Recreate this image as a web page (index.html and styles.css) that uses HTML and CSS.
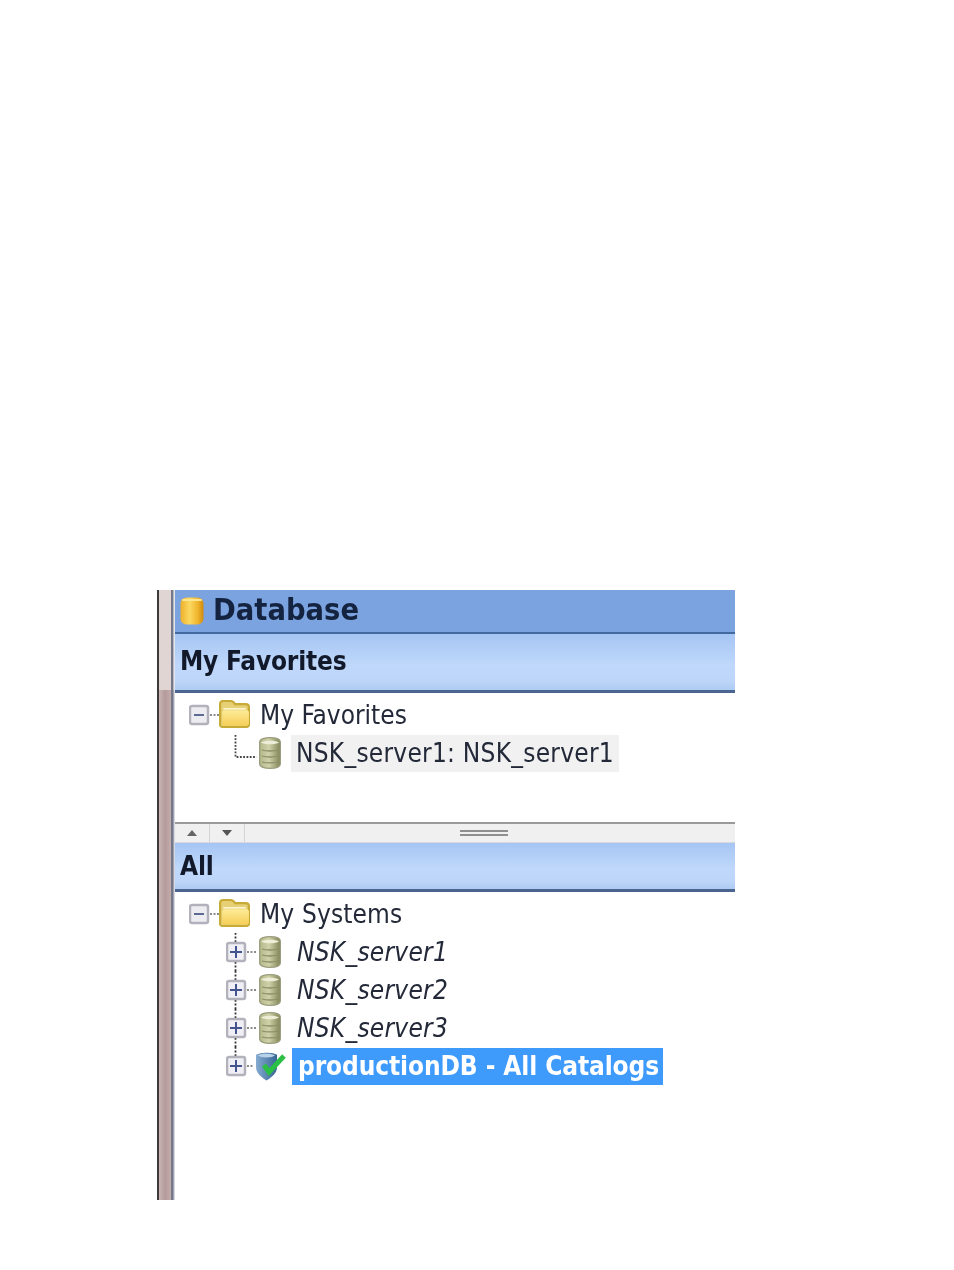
FILE: index.html
```html
<!DOCTYPE html>
<html lang="en">
<head>
<meta charset="utf-8">
<title>Database</title>
<link rel="stylesheet" href="styles.css">
</head>
<body>
<svg class="defs" width="0" height="0" aria-hidden="true">
  <defs>
    <linearGradient id="cyl" x1="0" x2="1" y1="0" y2="0">
      <stop offset="0" stop-color="#eeb02a"/><stop offset=".4" stop-color="#fbd860"/><stop offset=".75" stop-color="#f0b52c"/><stop offset="1" stop-color="#cf8a10"/>
    </linearGradient>
    <linearGradient id="srv" x1="0" x2="1" y1="0" y2="0">
      <stop offset="0" stop-color="#b4b88a"/><stop offset=".45" stop-color="#cfd2a8"/><stop offset="1" stop-color="#7f8456"/>
    </linearGradient>
    <linearGradient id="fold" x1="0" x2="0" y1="0" y2="1">
      <stop offset="0" stop-color="#fdeb98"/><stop offset="1" stop-color="#f6cf58"/>
    </linearGradient>
    <linearGradient id="shield" x1="0" x2="1" y1="0" y2="0">
      <stop offset="0" stop-color="#86acd2"/><stop offset="1" stop-color="#366493"/>
    </linearGradient>
    <symbol id="server" viewBox="0 0 22 32">
      <path d="M.7 5C.7 2 6 .7 11 .7s10.300 1.300 10.300 4.300v22c0 3-5.300 4.300-10.300 4.300S.7 30 .7 27z" fill="url(#srv)" stroke="#9a9d7c" stroke-width="1.300"/>
      <path d="M2 5.500c3 2.400 15 2.400 18 0-3-2.400-15-2.400-18 0z" fill="#eceed8"/>
      <path d="M3 13c4 1.300 12 1.300 16 0M3 19c4 1.300 12 1.300 16 0M3 25c4 1.300 12 1.300 16 0" fill="none" stroke="#8a8e66" stroke-width="1.300"/>
    </symbol>
    <symbol id="folder" viewBox="1 0 29 27" preserveAspectRatio="none">
      <path d="M2 24V4c0-2 1-3 3-3h7c2 0 3 1 4 3h10c2 0 3 1 3 3v17c0 1-1 2-2 2H4c-1 0-2-1-2-2z" fill="#e6cf74" stroke="#c8aa36" stroke-width="2"/>
      <path d="M4 12c0-1 1-2 2-2h21c1 0 2 1 2 2v11c0 1-1 1.500-2 1.500H6c-1 0-2-.5-2-1.500z" fill="url(#fold)"/>
      <path d="M5 8.500h21" stroke="#fff8d6" stroke-width="1.500"/>
    </symbol>
  </defs>
</svg>
<main class="window">
  <div class="rail"></div>
  <div class="panel">
    <header class="title-bar">
      <svg class="db-icon" viewBox="0 0 24 28" width="24" height="28" aria-hidden="true">
        <rect x=".5" y=".5" width="23" height="27" rx="6" fill="url(#cyl)"/>
        <path d="M3 3h18" stroke="#fde68e" stroke-width="2" stroke-linecap="round"/>
      </svg>
      <h1 class="title">Database</h1>
    </header>
    <h2 class="section section-fav">My Favorites</h2>
    <section class="tree tree-fav">
      <div class="row row-root">
        <svg class="toggle" viewBox="0 0 31 38" width="31" height="38" aria-hidden="true">
          <rect x="1" y="10" width="18" height="18" rx="2" fill="#ececf1" stroke="#b2b2bc" stroke-width="2.500"/>
          <path d="M5 19h10" stroke="#5c6a94" stroke-width="2"/>
          <path d="M21 19h9" stroke="#666" stroke-width="1.500" stroke-dasharray="2 1.500"/>
        </svg>
        <svg class="icon-folder"><use href="#folder"/></svg>
        <span class="label">My Favorites</span>
      </div>
      <div class="row row-child">
        <svg class="toggle" viewBox="0 0 31 38" width="31" height="38" aria-hidden="true">
          <path d="M9.500 1v22h21" fill="none" stroke="#444" stroke-width="1.800" stroke-dasharray="1.800 1.500"/>
        </svg>
        <svg class="icon-server"><use href="#server"/></svg>
        <span class="label label-fav">NSK_server1: NSK_server1</span>
      </div>
    </section>
    <div class="splitter">
      <span class="arrow-cell"><span class="arrow arrow-up"></span></span>
      <span class="arrow-cell"><span class="arrow arrow-down"></span></span>
      <span class="grip"></span>
    </div>
    <h2 class="section section-all">All</h2>
    <section class="tree tree-all">
      <div class="row row-root">
        <svg class="toggle" viewBox="0 0 31 38" width="31" height="38" aria-hidden="true">
          <rect x="1" y="10" width="18" height="18" rx="2" fill="#ececf1" stroke="#b2b2bc" stroke-width="2.500"/>
          <path d="M5 19h10" stroke="#5c6a94" stroke-width="2"/>
          <path d="M21 19h9" stroke="#666" stroke-width="1.500" stroke-dasharray="2 1.500"/>
        </svg>
        <svg class="icon-folder"><use href="#folder"/></svg>
        <span class="label label-sys">My Systems</span>
      </div>
      <div class="row row-child">
        <svg class="toggle" viewBox="0 0 31 38" width="31" height="38" aria-hidden="true">
          <path d="M9.500 0v9M9.500 29v9" stroke="#333" stroke-width="1.800" stroke-dasharray="1.800 1.800"/>
          <rect x="1" y="10" width="18" height="18" rx="2" fill="#efeff5" stroke="#b2b2bc" stroke-width="2.500"/>
          <path d="M4 19h12M10 13v12" stroke="#44548f" stroke-width="2"/>
          <path d="M21 19h9" stroke="#666" stroke-width="1.500" stroke-dasharray="2 1.500"/>
        </svg>
        <svg class="icon-server"><use href="#server"/></svg>
        <span class="label label-em">NSK_server1</span>
      </div>
      <div class="row row-child">
        <svg class="toggle" viewBox="0 0 31 38" width="31" height="38" aria-hidden="true">
          <path d="M9.500 0v9M9.500 29v9" stroke="#333" stroke-width="1.800" stroke-dasharray="1.800 1.800"/>
          <rect x="1" y="10" width="18" height="18" rx="2" fill="#efeff5" stroke="#b2b2bc" stroke-width="2.500"/>
          <path d="M4 19h12M10 13v12" stroke="#44548f" stroke-width="2"/>
          <path d="M21 19h9" stroke="#666" stroke-width="1.500" stroke-dasharray="2 1.500"/>
        </svg>
        <svg class="icon-server"><use href="#server"/></svg>
        <span class="label label-em">NSK_server2</span>
      </div>
      <div class="row row-child">
        <svg class="toggle" viewBox="0 0 31 38" width="31" height="38" aria-hidden="true">
          <path d="M9.500 0v9M9.500 29v9" stroke="#333" stroke-width="1.800" stroke-dasharray="1.800 1.800"/>
          <rect x="1" y="10" width="18" height="18" rx="2" fill="#efeff5" stroke="#b2b2bc" stroke-width="2.500"/>
          <path d="M4 19h12M10 13v12" stroke="#44548f" stroke-width="2"/>
          <path d="M21 19h9" stroke="#666" stroke-width="1.500" stroke-dasharray="2 1.500"/>
        </svg>
        <svg class="icon-server"><use href="#server"/></svg>
        <span class="label label-em">NSK_server3</span>
      </div>
      <div class="row row-child">
        <svg class="toggle" viewBox="0 0 31 38" width="31" height="38" aria-hidden="true">
          <path d="M9.500 0v9" stroke="#333" stroke-width="1.800" stroke-dasharray="1.800 1.800"/>
          <rect x="1" y="10" width="18" height="18" rx="2" fill="#efeff5" stroke="#b2b2bc" stroke-width="2.500"/>
          <path d="M4 19h12M10 13v12" stroke="#44548f" stroke-width="2"/>
          <path d="M21 19h7" stroke="#666" stroke-width="1.500" stroke-dasharray="2 1.500"/>
        </svg>
        <svg class="icon-catalog" viewBox="0 0 32 30" aria-hidden="true">
          <path d="M1 4c3-3 18-3 21 0v12c0 6-5 10-10.500 13.500C6 26 1 22 1 16z" fill="url(#shield)"/>
          <path d="M3 4.500c3-2.500 14-2.500 17 0-3 2.500-14 2.500-17 0z" fill="#b8d2ea"/>
          <path d="M9 14l5 7L29 5" fill="none" stroke="#2cbf46" stroke-width="5"/>
        </svg>
        <span class="label label-selected">productionDB - All Catalogs</span>
      </div>
    </section>
  </div>
</main>
</body>
</html>
```

FILE: styles.css
```css
* {
  box-sizing: border-box;
}

html,
body {
  margin: 0;
  background: #fff;
}

body {
  padding: 590px 0 70px 157px;
  font-family: "DejaVu Sans Condensed", "DejaVu Sans", sans-serif;
  color: #1c2230;
}

.defs {
  position: absolute;
}

.window {
  display: flex;
  width: 578px;
  height: 610px;
  filter: blur(0.7px);
}

.rail {
  flex: 0 0 18px;
  border-left: 2px solid #3c3a3a;
  background:
    linear-gradient(to right, #e0d5d2 0 12px, #74788a 12px 14px, #b8bac4 14px 15px, #e6e6ea 15px) top / 100% 100px no-repeat,
    linear-gradient(to right, #c9b5b4 0, #b59a9c 6px, #c2acac 12px, #74788a 12px 14px, #9fa2ad 14px 15px, #d8d9de 15px);
}

.panel {
  flex: 1;
  min-width: 0;
  display: flex;
  flex-direction: column;
}

.title-bar {
  display: flex;
  align-items: center;
  height: 44px;
  padding: 0 0 4px 5px;
  gap: 9px;
  background: #7aa3e0;
  border-bottom: 2px solid #44699f;
}

.db-icon {
  flex: none;
  margin-top: 4px;
}

.title {
  margin: 0;
  font-size: 30.500px;
  font-weight: 700;
  color: #14233f;
}

.section {
  margin: 0;
  display: flex;
  align-items: center;
  padding: 0 0 2px 5px;
  font-size: 26px;
  font-weight: 700;
  letter-spacing: -0.2px;
  color: #12192a;
  background: linear-gradient(to bottom, #a5c5f3, #bfd8fb 55%, #bcd5f8 85%, #aecbf3);
}

.section-fav {
  height: 59px;
  border-bottom: 3px solid #4a6590;
}

.section-all {
  height: 49px;
  padding-bottom: 0;
  border-bottom: 3px solid #4a6590;
}

.tree {
  background: #fff;
  padding-top: 3px;
}

.tree-fav {
  height: 129px;
}

.tree-all {
  flex: 1;
}

.row {
  display: flex;
  align-items: center;
  height: 38px;
  font-size: 26px;
  color: #232938;
}

.row-root {
  padding-left: 14px;
}

.row-child {
  padding-left: 51px;
}

.toggle {
  flex: none;
}

.icon-folder {
  flex: none;
  width: 31px;
  height: 28px;
  margin: -3px 10px 0 -1px;
}

.icon-server {
  flex: none;
  width: 22px;
  height: 32px;
  margin: 0 10px 0 2px;
}

.icon-catalog {
  flex: none;
  width: 32px;
  height: 30px;
  margin: 0 5px 0 -2px;
}

.label {
  display: block;
  line-height: 37px;
  white-space: nowrap;
}

.label-sys {
  letter-spacing: 0.15px;
}

.label-fav {
  padding: 0 5px;
  letter-spacing: 0.25px;
  background: #f1f1f1;
}

.label-em {
  padding-left: 6px;
  letter-spacing: 0.25px;
  font-style: italic;
}

.label-selected {
  padding: 0 4px 0 6px;
  background: #3f9bfb;
  color: #fff;
  font-weight: 700;
  letter-spacing: -0.1px;
}

.splitter {
  display: flex;
  align-items: center;
  flex: none;
  height: 21px;
  border-top: 2px solid #9a9a9a;
  border-bottom: 1px solid #d8d8e0;
  background: #f0f0f0;
}

.arrow-cell {
  display: flex;
  align-items: center;
  justify-content: center;
  width: 35px;
  height: 100%;
  border-right: 1px solid #d4d4d4;
}

.arrow {
  width: 0;
  height: 0;
  border-left: 5px solid transparent;
  border-right: 5px solid transparent;
}

.arrow-up {
  border-bottom: 6px solid #666;
}

.arrow-down {
  border-top: 6px solid #555;
}

.grip {
  width: 48px;
  height: 6px;
  margin-left: 215px;
  border-top: 2px solid #8f8f8f;
  border-bottom: 2px solid #8f8f8f;
}
```
